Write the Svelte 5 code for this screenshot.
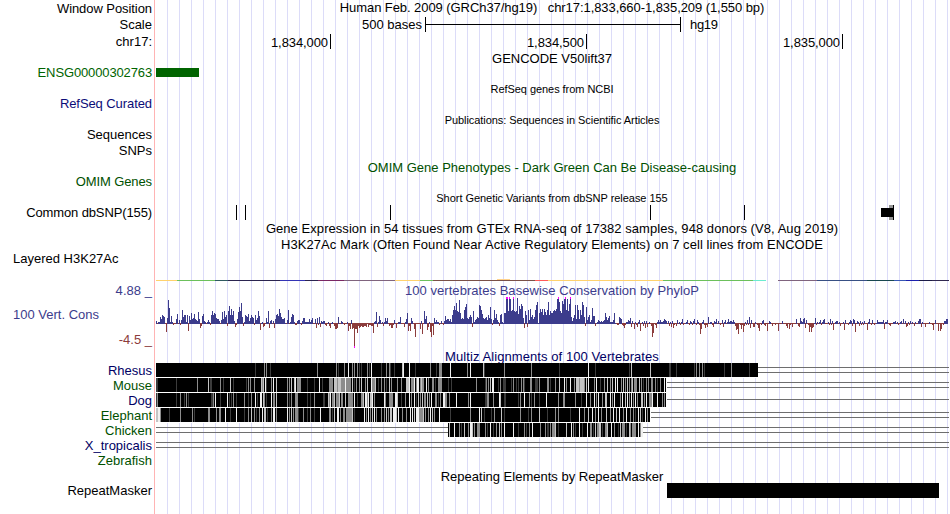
<script lang="ts">
	import type { Snippet } from 'svelte';

	type Block = { x: number; w: number; c: string };

	interface Row {
		h: number;
		label?: string;
		title?: string;
		color?: string;
		small?: boolean;
		/** Line height of the title. */
		lead?: number;
		/** Letter spacing in px. */
		fit?: number;
		art?: Snippet;
	}

	// Window geometry: the data area covers x = 155..949.
	const LEFT = 155;
	const WIDTH = 794;

	const rulerTicks = [
		{ x: 330, label: '1,834,000' },
		{ x: 586, label: '1,834,500' },
		{ x: 842, label: '1,835,000' },
	];

	const snps = [236, 245, 390, 650, 744];

	// [start, end, colour] of the dominant cell line along the H3K27Ac overlay
	const h3k27ac: [number, number, string][] = [
		[156, 177, '#ffd26e'],
		[177, 215, '#6cc05c'],
		[215, 228, '#2f5a60'],
		[228, 280, '#2b2450'],
		[280, 305, '#3434b4'],
		[305, 318, '#2b2450'],
		[318, 344, '#7a2864'],
		[344, 395, '#80647e'],
		[395, 420, '#ffd26e'],
		[420, 433, '#6cc05c'],
		[433, 535, '#7a5048'],
		[535, 548, '#ff5a5a'],
		[548, 663, '#ffd26e'],
		[663, 753, '#6cc05c'],
		[753, 766, '#6cecd0'],
		[778, 817, '#80647e'],
		[817, 867, '#385084'],
		[867, 894, '#184850'],
		[894, 906, '#3858b4'],
		[906, 919, '#1c20ac'],
		[919, 932, '#1c1c48'],
		[932, 949, '#302850'],
	];

	// One signed PhyloP height per pixel column, starting at x = 156.
	const phyloP = [
		2, -1, 1, 1, 6, 4, 8, 7, 6, -1, -9, 5, 23, 15, 1, 7, 1, -2, -1, -1, 4, 9, -1, 3, -2, 3, 13, 6, 8, 8,
		1, 8, -8, 7, 3, 10, 4, 5, 9, 4, 3, 2, 11, 4, -5, -3, 7, 9, 2, 1, -1, 1, 3, 1, -2, 8, 12, 8, 10, 9,
		5, 4, 4, 2, -1, 3, 11, 4, 12, 6, 8, -3, 12, 17, 8, 14, 8, 12, 2, -4, -2, 4, 11, 16, 12, 20, 6, -3,
		1, 8, 7, 6, 9, 2, 5, 8, 6, 5, -2, 8, 3, 5, 12, 7, -7, 0, 1, -4, -3, -1, 5, 1, 12, -5, 2, 3, -1, 2,
		-5, 4, 8, 9, 7, 14, 10, 6, 4, 4, 5, 0, -1, 3, 13, -1, 1, 6, 9, 8, 1, -2, -2, 2, 3, 3, 0, -2, 2, 5,
		5, 1, 1, 1, 1, 4, 1, 3, 5, -1, -1, 4, -5, 5, -2, 6, -4, 2, 1, 2, 2, -2, -3, -1, 1, -3, -5, 0, 1,
		-1, -3, -6, -6, -5, 6, -1, -1, 2, 1, -1, -2, -1, -1, 1, -8, -3,
		-6, 3, -6, -5, -25, -6, -6, -10, -3, -5, -4, -3, -4, -4, -3, -3, -4, -1, -4, -2, -2, -3, -3, -10,
		1, 2, 11, -4, 1, 7, 3, -1, 1, -3, 1, 5, 2, 5, -1, -3, -2, -5, -5, -2, 3, -1, -5, -1, 1, 1, 6, -1,
		-1, -1, -4, 1, 4, 10, -8, -3, -8, 5, 2, -1, -6, -14, -1, -1, -1, -1, -6, 2, -11, -1, 12, 4, 7, -7,
		-4, 1, -9, -14, -3, -12, 5, 1, 3, 1, 1, -2, -1, 2, -1, -2, 2, 7, 3, 4, 4, 2, 4, 1, 8, 13, 17, 13,
		20, 12, 11, 23, 10, 4, 5, 4, 13, 16, 19, 5, 4, 6, 8, 6, -4, 12, 1, 3, 4, 6, 5, 18, 17, 13, 9, 5,
		4, 5, 6, 3, 8, 5, 16, 4, -2, 3, 13, 5, 9, 3, 1, -3, 8, 9, 1, 0, 10, 10, 26, 26, 12, 26, 24, 12,
		13, 26, 12, 11, 12, 25, 9, 17, 14, 19, 17, 5, -5, 12, 8, -4, 13, 3, 14, 6, 8, 4, 6, 13, 18, 21, 0,
		10, 14, 11, 14, 8, 14, 11, 8, 13, 21,
		8, 12, 10, 10, 12, 13, 12, 14, 24, 26, 21, 12, 10, 22, 19, 24, 26, 13, 24, 12, 19, 26, 6, 2, 5, 8,
		18, 4, 18, 13, 4, 13, 8, 21, 18, 6, -3, 16, 3, 6, 8, 1, 3, 15, 7, 7, -3, 0, 1, 3, 2, 1, 2, 1, 2,
		3, 10, 6, 3, 5, 7, 1, 1, 1, 3, 10, 0, -1, -2, -2, 6, 5, 4, -2, -3, -5, -2, 1, 1, 3, 2, 5, -4, 2,
		-1, -6, 1, -2, -4, 1, 3, -8, -1, 1, -3, 2, -5, 2, -4, -1, 1, -1, -3, -14, -10, -1, -2, -5, 1, 3,
		1, 3, 1, 1, 2, 4, 3, 2, -1, 2, -3, 1, -4, 2, -5, -2, -1, -3, 3, -1, 1, -2, 1, 4, -2, -1, 0, 1, 3,
		-1, -2, 2, 1, -2, 2, 4, -1, -2, 3, 1, -2, -11, -6, 1, 3, -2, -5, -2, -4, 6, -1, 1, 1, -2, -4, 2,
		1, 4, -1, 2, -1, -2, -1, 3, -4, 1, 3, -1, 1, 4, 1, 2, 2, 1, 3, 1, -3, -7, -6, -11, -1, -2, -6,
		-2, -9, -3, 1, -2, 3, -2,
		6, -5, 3, -1, -4, -4, 1, -1, -2, -5, -8, -1, -2, 2, 3, -2, -3, -1, -8, -1, 2, 1, -1, -3, -1, -1,
		-2, -1, -1, -8, -1, -1, -1, 2, -1, -1, -1, -3, -5, -1, -6, -2, -1, -4, -1, -1, -1, 4, -1, -3, -4,
		5, 2, 1, 4, 5, -5, 3, -1, -2, -9, -4, -9, -5, -4, 0, 5, -2, 1, -1, 1, 3, -2, 1, 3, 4, -1, -1, -1,
		1, -2, 4, -2, 2, -7, -1, 1, 2, 2, -1, 1, -3, -1, -1, 1, -7, 3, -1, -1, -2, 1, 3, 2, -3, 4, 3, -9,
		-1, 2, 1, -3, 2, -2, 1, -2, 2, -1, -1, -7, 1, 4, -1, -2, 3, -1, -2, -1, 0, 3, 1, 1, 1, 1, 1, 3,
		-6, 1, 1, 3, -1, -2, -3, -1, -1, 1, 1, 2, -1, 1, -2, -1, 1, 2, -1, 4, -1, 2, -4, -3, 1, -2, 2,
		-1, 1, -1, -3, 1, -1, -1, 2, 4, 4, -4, 1, -1, -1, -4, -1, -1, -1, 1, -1, -1, -2, -7, -1, 3, -1,
		-1, -8, -1, -8, -6, -1, -2, 2, 2, 4, 4,
	];

	// Columns whose score runs past the top or the bottom of the scale
	const clipped = phyloP.flatMap((v, i) => (v >= 26 || v <= -25 ? [{ x: 156 + i, v }] : []));

	// Mismatch stripes: x, shade (d/m/l/w = dark to white), optional width
	const shades: Record<string, string> = { d: '#3c3c3c', m: '#8c8c8c', l: '#c4c4c4', w: '#f0f0f0' };

	function stripes(code: string): Block[] {
		return [...code.matchAll(/(\d+)([dmlw])(\d*)/g)].map((s) => ({
			x: +s[1],
			w: +(s[3] || 1),
			c: shades[s[2]],
		}));
	}

	const species = [
		{
			name: 'Rhesus',
			color: 'navy',
			from: 156,
			to: 758,
			gaps: [[758, 949]],
			marks: stripes(
				'255d 264m 266m 270d 317m 336m 338d 344m 348w 352m 354m 357m 359d 361d 367m 369d 371w 381d 386m 389m 390d 394d 402l 403w 409w 415d 430m 436d 439m3 450w 467m 470w 483l 484d 504m 531m 559d 588w 595d 629d 631l 650l 669d2 676d 694d 696m 699m 702m 704d 724d 731m 749d',
			),
		},
		{
			name: 'Mouse',
			color: 'green',
			from: 156,
			to: 666,
			gaps: [[667, 949]],
			marks: stripes(
				'156d2 176d 197m 208l 210d2 220m 223d 230l 233d 246d 248m 250m 254m 261l 262m 263l 265w 266d 271m 273w 276l 287m 289m 291l 294l 295w 297m4 307d 314d 319w 322d 329m4 334l3 337m 338l3 341m4 345w 346m5 352l 354d 356m 359m 361l 365m 367l 371w 372m3 375l 378d 381m 384m 386d 389l 391m 397m 401m 406l3 409w 411m3 414w 416m 417w2 420m 421l 422m2 426w 428m 432m2 435d 438m4 448d 451d 476m 485d 486m 488m 490l 492w2 498d 500m 503d3 511d 513m 516d 518d 521m 523m 524d 530m2 535d3 539m 547m2 550d 555m 559l 564w 566m 570w 574m 576l3 579m 580l4 584m 586l 588w 594m 596w 600d 604m 607l 610m 612l 615w 617w 621m 623l 625m 627l 629m 631m 632l 634m3 639l 641m 643d 646m 648m 651m2 655m 657d 660m 664w',
			),
		},
		{
			name: 'Dog',
			color: 'navy',
			from: 156,
			to: 666,
			gaps: [[667, 949]],
			single: true,
			marks: stripes(
				'156d 157m 176d 180m 184d 186m 188d 211d2 213m 215w 220d 227w 229d 231d 233m 236d 244m 248d 251m 255w 257d 260w2 263l 264m 266d 271w 273m2 276l 287m 289d 291m 295m3 307d 310d 314m 323d2 328l 329m 330w 332m2 334l 336m3 339l 341m2 345l 348m2 350m3 354w 357d 361m2 363l 365w2 367m 368w 370l2 372w 374m 384w 385m 389m3 392m 395w2 397l 401d 405m 409w 411m 414w 416d 418l 420m 422l 424m2 427l 429m 431w 435m2 438d 440m 443w2 445m2 449m 456w 468m 470w 485d2 487m2 493m 499w 500l 504d2 518d 520m 524w 529m 531d 534m 539d 546w 558m 563m2 575m 581d 586w 590m 594w 596m 598w 602m 605l2 610w 612m 614w 620m 622w 625l 627w 629m 631w 633m 635w 637m 641l2 644m 646w 649m3 652w 657w 662m 664m',
			),
		},
		{
			name: 'Elephant',
			color: 'green',
			from: 156,
			to: 650,
			gaps: [[651, 949]],
			marks: stripes(
				'156l2 158w2 160m 169d 180m 192m 194d 208m2 216m 219m2 225w 230d 236w 244d 248m 251l 254m 256d 259m 262w 264l2 267d 271m 273w2 276m 287w 289m 291l 293m 295m3 298d 303m 307d 310m 314d 320w 329m2 332d 334l 337w2 340m 343m2 346m3 349m3 352l 354d 364w 366m 368w 370m 372l 374w 376m 381m 384m 386l 388m 390l2 393w3 396l 398w 402m 406m 410w 412w 414l 416w3 419m4 423l 425m 428m 430w 432l 434m 439w 450d 470m 479w 481l 484d 491d 494m 501l 504d 520m 528d 531m 539l 547d 555m 558m 570d 579w 584m 588l 592w 595m 598w 601m 606l 610m 613w 616l 619w 623m 626w 630m 633m 635d 638w 640l 642d 645w 647m',
			),
		},
		{
			name: 'Chicken',
			color: 'green',
			from: 448,
			to: 643,
			gaps: [
				[156, 448],
				[643, 949],
			],
			marks: stripes(
				'449l 454w 459m 461d 464l 468m 470w2 472l 474m 477m3 485m 487d 490w 493d 496m 499l 501m 504w 513w 518d 524m 526d 529m 532w 540m 545m 547d2 550m 552m3 555l 558d 566l 571w 573m 575d 579w 582d 587w 590m2 593d 595l 597m2 599l2 602d 605m2 607l 611w 614m 618d 620l 622m3 626d 629l 630m 632m4 638w 640m 641w2',
			),
		},
		{ name: 'X_tropicalis', color: 'navy', from: 0, to: 0, gaps: [[156, 949]], marks: [] },
		{ name: 'Zebrafish', color: 'green', from: 0, to: 0, gaps: [], marks: [] },
	];
</script>

{#snippet track({ h, label = '', title = '', color = 'black', small = false, lead = 17, fit = 0, art }: Row)}
	<div class="track" style="height: {h}px; letter-spacing: {fit}px">
		<div class="label {color}" style="line-height: {h}px">{label}</div>
		<div class="data">
			{#if title}
				<div class="title {color}" class:small style="line-height: {lead}px">{title}</div>
			{/if}
			{#if art}
				<svg width={WIDTH} height={h} viewBox="{LEFT} 0 {WIDTH} {h}">
					{@render art()}
				</svg>
			{/if}
		</div>
	</div>
{/snippet}

{#snippet scaleBar()}
	<text x="362" y="12" textLength="60">500 bases</text>
	<rect x="425" y="0" width="1" height="15" />
	<rect x="425" y="7" width="256" height="1" />
	<rect x="680" y="0" width="1" height="15" />
	<text x="690" y="12" textLength="28">hg19</text>
{/snippet}

{#snippet ruler()}
	{#each rulerTicks as t (t.x)}
		<text x={t.x - 59} y="14" textLength="57">{t.label}</text>
		<rect x={t.x} y="1" width="1" height="15" />
	{/each}
{/snippet}

{#snippet gencode()}
	<rect x="156" y="2" width="43" height="9" fill="#006400" />
{/snippet}

{#snippet dbSnp()}
	{#each snps as x (x)}
		<rect {x} y="0" width="1" height="15" />
	{/each}
	<rect x="889" y="0" width="4" height="15" fill="#969696" />
	<rect x="881" y="3" width="12" height="9" />
	<rect x="893" y="0" width="1" height="15" />
{/snippet}

{#snippet overlay()}
	{#each h3k27ac as [from, to, c] (from)}
		<rect x={from} y="28" width={to - from} height="1" fill={c} />
	{/each}
	<rect x="497" y="27" width="13" height="1" fill="#ffd28c" />
{/snippet}

{#snippet wiggle()}
	{#each phyloP as v, i (i)}
		{#if v > 0}
			<rect x={156 + i} y={26 - v} width="1" height={v} fill="#3c3c8c" />
		{/if}
		<rect x={156 + i} y="26" width="1" height={v < 0 ? -v : 1} fill={v < 0 ? '#8c3c3c' : '#3c3c8c'} />
	{/each}
	{#each clipped as p (p.x)}
		<rect x={p.x} y={p.v > 0 ? 0 : 49} width="1" height="2" fill="#ff00ff" />
	{/each}
{/snippet}

{#snippet repeats()}
	<rect x="667" y="0" width="272" height="15" />
{/snippet}

<main class="browser">
	{@render track({ h: 17, label: 'Window Position', title: 'Human Feb. 2009 (GRCh37/hg19)\u00a0\u00a0 chr17:1,833,660-1,835,209 (1,550 bp)', lead: 15, fit: -0.07 })}
	{@render track({ h: 16, label: 'Scale', art: scaleBar })}
	{@render track({ h: 17, label: 'chr17:', art: ruler })}
	{@render track({ h: 16, title: 'GENCODE V50lift37' })}
	{@render track({ h: 14, label: 'ENSG00000302763', color: 'gene', fit: -0.13, art: gencode })}
	{@render track({ h: 17, title: 'RefSeq genes from NCBI', small: true, lead: 19, fit: -0.05 })}
	{@render track({ h: 14, label: 'RefSeq Curated', color: 'refseq', fit: -0.08 })}
	{@render track({ h: 17, title: 'Publications: Sequences in Scientific Articles', small: true, lead: 19, fit: -0.065 })}
	{@render track({ h: 14, label: 'Sequences' })}
	{@render track({ h: 17, label: 'SNPs' })}
	{@render track({ h: 16, title: 'OMIM Gene Phenotypes - Dark Green Can Be Disease-causing', color: 'green' })}
	{@render track({ h: 14, label: 'OMIM Genes', color: 'green', fit: -0.1 })}
	{@render track({ h: 16, title: 'Short Genetic Variants from dbSNP release 155', small: true, lead: 19, fit: -0.04 })}
	{@render track({ h: 15, label: 'Common dbSNP(155)', fit: -0.12, art: dbSnp })}
	{@render track({ h: 17, title: 'Gene Expression in 54 tissues from GTEx RNA-seq of 17382 samples, 948 donors (V8, Aug 2019)', fit: 0.055 })}
	{@render track({ h: 15, title: 'H3K27Ac Mark (Often Found Near Active Regulatory Elements) on 7 cell lines from ENCODE', lead: 15, fit: 0.05 })}

	<div class="track overlay">
		<div class="label start">Layered H3K27Ac</div>
		<div class="data">
			<svg width={WIDTH} height="32" viewBox="{LEFT} 0 {WIDTH} 32">{@render overlay()}</svg>
		</div>
	</div>

	{@render track({ h: 13, label: '4.88 _', title: '100 vertebrates Basewise Conservation by PhyloP', color: 'phylo', lead: 13, fit: 0.04 })}
	<div class="track wiggle">
		<div class="side">
			<div class="label start phylo">100 Vert. Cons</div>
			<div class="label low">-4.5 _</div>
		</div>
		<div class="data">
			<svg width={WIDTH} height="52" viewBox="{LEFT} 0 {WIDTH} 52">{@render wiggle()}</svg>
		</div>
	</div>

	{@render track({ h: 14, title: 'Multiz Alignments of 100 Vertebrates', color: 'navy', lead: 15, fit: 0.08 })}
	{#each species as s (s.name)}
		<div class="track species">
			<div class="label {s.color}">{s.name}</div>
			<div class="data">
				<svg width={WIDTH} height="15" viewBox="{LEFT} 0 {WIDTH} 15">
					{#each s.gaps as [from, to] (from)}
						{#if s.single}
							<rect x={from} y="6" width={to - from} height="1" fill="#6e6e6e" />
						{:else}
							<rect x={from} y="4" width={to - from} height="1" fill="#6e6e6e" />
							<rect x={from} y="9" width={to - from} height="1" fill="#6e6e6e" />
						{/if}
					{/each}
					{#if s.to > s.from}
						<rect x={s.from} y="0" width={s.to - s.from} height="15" fill="#fff" />
						<rect x={s.from} y="0" width={s.to - s.from} height="14" />
					{/if}
					{#each s.marks as m (m.x)}
						<rect x={m.x} y="0" width={m.w} height="14" fill={m.c} />
					{/each}
				</svg>
			</div>
		</div>
	{/each}
	{@render track({ h: 15, title: 'Repeating Elements by RepeatMasker' })}
	{@render track({ h: 15, label: 'RepeatMasker', art: repeats })}
</main>

<style>
	:global(body) {
		margin: 0;
		background: #fff;
	}
	.browser {
		box-sizing: border-box;
		width: 949px;
		height: 514px;
		overflow: hidden;
		font: 13px 'Liberation Sans', Arial, sans-serif;
		color: #000;
		/* red edge of the data area, then a guide line every 12px */
		background:
			linear-gradient(#ffb4b4, #ffb4b4) 154px 0 / 1px 100% no-repeat,
			repeating-linear-gradient(90deg, #dcdcf8 0 1px, transparent 1px 12px) 167px 0 / 782px 100% no-repeat;
	}
	.track {
		display: grid;
		grid-template-columns: 155px 794px;
	}
	.label {
		padding-right: 3px;
		line-height: 14px;
		text-align: right;
		white-space: pre;
	}
	.label.start {
		padding-left: 13px;
		text-align: left;
	}
	.title {
		text-align: center;
		white-space: nowrap;
	}
	.small {
		font-size: 11px;
	}
	svg {
		display: block;
		shape-rendering: crispEdges;
	}
	.overlay {
		height: 32px;
	}
	.wiggle {
		height: 52px;
	}
	.side {
		display: flex;
		flex-direction: column;
		justify-content: space-between;
		padding: 11px 0 2px;
	}
	.species {
		height: 15px;
	}
	.species .label {
		line-height: 16px;
	}
	.black {
		color: #000;
	}
	.gene {
		color: #006400;
	}
	.green {
		color: #005000;
	}
	.navy {
		color: #000064;
	}
	.refseq {
		color: #0c0c78;
	}
	.phylo {
		color: #3c3c8c;
	}
	.low {
		color: #8c3c3c;
	}
</style>
